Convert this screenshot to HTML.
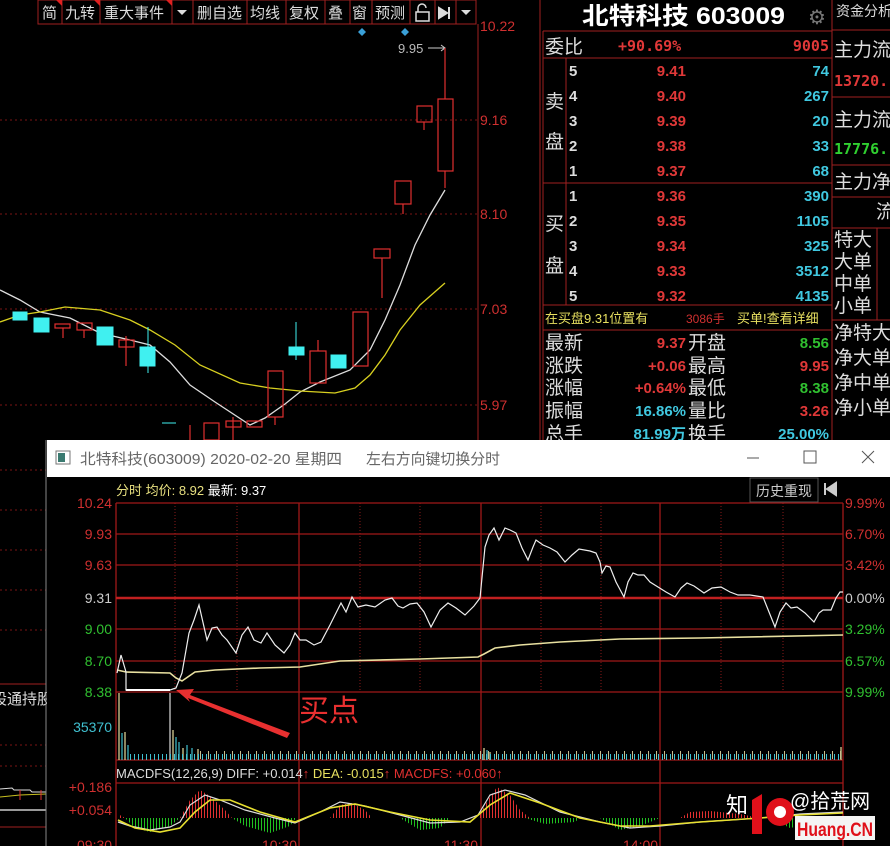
<!DOCTYPE html>
<html><head><meta charset="utf-8"><style>
html,body{margin:0;padding:0;background:#000;width:890px;height:846px;overflow:hidden}
svg{display:block}
text{font-family:"Liberation Sans","Noto Sans CJK SC",sans-serif}
.m{font-family:"DejaVu Sans Mono","Liberation Mono",monospace;font-weight:bold}
</style></head><body>
<svg width="890" height="846" viewBox="0 0 890 846" xmlns="http://www.w3.org/2000/svg">
<defs>
<pattern id="pr" width="3" height="10" patternUnits="userSpaceOnUse"><rect x="0" y="0" width="1" height="10" fill="#e03030"/></pattern>
<pattern id="pg" width="3" height="10" patternUnits="userSpaceOnUse"><rect x="0" y="0" width="1" height="10" fill="#20c020"/></pattern>
</defs>
<rect width="890" height="846" fill="#000"/>
<g stroke="#7a1515" stroke-dasharray="2 3" stroke-width="1">
<line x1="0" y1="120" x2="478" y2="120"/><line x1="0" y1="214" x2="478" y2="214"/><line x1="0" y1="309" x2="478" y2="309"/><line x1="0" y1="405" x2="478" y2="405"/>
</g>
<line x1="478" y1="24" x2="478" y2="440" stroke="#a02020"/>
<line x1="540" y1="0" x2="540" y2="440" stroke="#a02020"/>
<g font-size="14" fill="#d03030">
<text x="480" y="31">10.22</text><text x="480" y="125">9.16</text><text x="480" y="219">8.10</text><text x="480" y="314">7.03</text><text x="480" y="410">5.97</text>
</g>
<g>
<rect x="38" y="0" width="438" height="24" fill="#000" stroke="#a02020"/>
<g stroke="#a02020"><line x1="62" y1="0" x2="62" y2="24"/><line x1="100" y1="0" x2="100" y2="24"/><line x1="172" y1="0" x2="172" y2="24"/><line x1="193" y1="0" x2="193" y2="24"/><line x1="247" y1="0" x2="247" y2="24"/><line x1="286" y1="0" x2="286" y2="24"/><line x1="325" y1="0" x2="325" y2="24"/><line x1="350" y1="0" x2="350" y2="24"/><line x1="372" y1="0" x2="372" y2="24"/><line x1="410" y1="0" x2="410" y2="24"/><line x1="435" y1="0" x2="435" y2="24"/><line x1="456" y1="0" x2="456" y2="24"/></g>
<g fill="#e02020"><path d="M56 0h6v6z"/><path d="M94 0h6v6z"/><path d="M166 0h6v6z"/></g>
<g font-size="15" fill="#ddd">
<text x="42" y="18">简</text><text x="65" y="18">九转</text><text x="104" y="18">重大事件</text><text x="197" y="18">删自选</text><text x="250" y="18">均线</text><text x="289" y="18">复权</text><text x="328" y="18">叠</text><text x="352" y="18">窗</text><text x="375" y="18">预测</text>
</g>
<path d="M177 10h10l-5 5z" fill="#ddd"/><path d="M461 10h10l-5 5z" fill="#ddd"/>
<path d="M416 12h13v9h-13z M418 12v-4a4 4 0 0 1 8 0" fill="none" stroke="#ddd" stroke-width="1.5"/>
<path d="M439 8l8 5l-8 5z M449 7v12" fill="#ddd" stroke="#ddd" stroke-width="2"/>
</g>
<path d="M362 28l4 4l-4 4l-4-4z M405 28l4 4l-4 4l-4-4z" fill="#3aa0d8"/>
<text x="398" y="53" font-size="13" fill="#bbb">9.95</text>
<path d="M428 48h16" stroke="#ccc"/><path d="M441 45l4 3l-4 3" fill="none" stroke="#ccc"/>
<polyline points="0,290 20,300 40,312 70,318 100,333 130,340 150,345 170,362 190,385 215,402 250,425 265,418 285,404 300,392 320,382 350,370 370,350 385,320 400,285 415,245 430,215 445,190" fill="none" stroke="#ddd" stroke-width="1.3"/>
<polyline points="0,322 20,315 40,312 65,307 100,310 130,320 150,330 175,345 200,365 240,383 270,388 300,391 335,393 355,388 370,375 385,355 400,330 420,305 445,283" fill="none" stroke="#d8d020" stroke-width="1.3"/>
<g fill="#40f0f0" stroke="#40f0f0">
<rect x="13" y="312" width="14" height="8"/><rect x="34" y="318" width="15" height="14"/><rect x="97" y="327" width="16" height="18"/><rect x="140" y="347" width="15" height="19"/><line x1="148" y1="327" x2="148" y2="373"/><rect x="289" y="347" width="15" height="8"/><line x1="296" y1="322" x2="296" y2="360"/><rect x="331" y="355" width="15" height="13"/><line x1="162" y1="423" x2="176" y2="423"/>
</g>
<g fill="none" stroke="#e03030" stroke-width="1.2">
<rect x="55" y="324" width="15" height="4"/><line x1="63" y1="328" x2="63" y2="338"/>
<rect x="77" y="323" width="15" height="7"/><line x1="84" y1="330" x2="84" y2="338"/>
<rect x="119" y="340" width="15" height="7"/><line x1="126" y1="336" x2="126" y2="366"/>
<line x1="190" y1="425" x2="190" y2="440"/>
<rect x="204" y="423" width="15" height="17"/>
<rect x="226" y="421" width="15" height="6"/><line x1="233" y1="417" x2="233" y2="440"/>
<rect x="247" y="421" width="15" height="6"/>
<rect x="268" y="371" width="15" height="46"/><line x1="275" y1="417" x2="275" y2="425"/>
<rect x="310" y="351" width="16" height="32"/><line x1="318" y1="340" x2="318" y2="351"/>
<rect x="353" y="312" width="15" height="54"/>
<rect x="374" y="249" width="16" height="9"/><line x1="382" y1="258" x2="382" y2="298"/>
<rect x="395" y="181" width="16" height="23"/><line x1="403" y1="204" x2="403" y2="214"/>
<rect x="417" y="106" width="15" height="16"/><line x1="424" y1="122" x2="424" y2="130"/>
<rect x="438" y="99" width="15" height="72"/><line x1="445" y1="48" x2="445" y2="99"/><line x1="445" y1="171" x2="445" y2="188"/>
</g>
<text x="582" y="24" font-size="24" font-weight="bold" fill="#fff" textLength="203" lengthAdjust="spacingAndGlyphs">北特科技 603009</text>
<text x="808" y="24" font-size="20" fill="#777">⚙</text>
<g stroke="#a02020" fill="none">
<line x1="543" y1="31" x2="832" y2="31"/><line x1="543" y1="58" x2="832" y2="58"/><line x1="566" y1="58" x2="566" y2="305"/><line x1="543" y1="183" x2="832" y2="183"/><line x1="543" y1="305" x2="832" y2="305"/><line x1="543" y1="330" x2="832" y2="330"/><line x1="832" y1="0" x2="832" y2="440"/>
<line x1="543" y1="31" x2="543" y2="440"/>
</g>
<text x="545" y="53" font-size="19" fill="#ddd">委比</text>
<text x="618" y="51" class="m" font-size="15" fill="#e03838">+90.69%</text>
<text x="829" y="51" class="m" font-size="15" fill="#e03838" text-anchor="end">9005</text>
<text x="545" y="108" font-size="19" fill="#ddd">卖</text><text x="545" y="148" font-size="19" fill="#ddd">盘</text>
<text x="545" y="230" font-size="19" fill="#ddd">买</text><text x="545" y="272" font-size="19" fill="#ddd">盘</text>
<g class="m" font-size="15" fill="#ddd"><text x="569" y="76">5</text><text x="569" y="101">4</text><text x="569" y="126">3</text><text x="569" y="151">2</text><text x="569" y="176">1</text><text x="569" y="201">1</text><text x="569" y="226">2</text><text x="569" y="251">3</text><text x="569" y="276">4</text><text x="569" y="301">5</text></g>
<g class="m" font-size="15" fill="#e03838" text-anchor="end"><text x="686" y="76">9.41</text><text x="686" y="101">9.40</text><text x="686" y="126">9.39</text><text x="686" y="151">9.38</text><text x="686" y="176">9.37</text><text x="686" y="201">9.36</text><text x="686" y="226">9.35</text><text x="686" y="251">9.34</text><text x="686" y="276">9.33</text><text x="686" y="301">9.32</text></g>
<g class="m" font-size="15" fill="#40c8e0" text-anchor="end"><text x="829" y="76">74</text><text x="829" y="101">267</text><text x="829" y="126">20</text><text x="829" y="151">33</text><text x="829" y="176">68</text><text x="829" y="201">390</text><text x="829" y="226">1105</text><text x="829" y="251">325</text><text x="829" y="276">3512</text><text x="829" y="301">4135</text></g>
<text x="545" y="323" font-size="13" fill="#e8e060">在买盘9.31位置有</text>
<text x="686" y="323" font-size="12" fill="#d03030">3086手</text>
<text x="737" y="323" font-size="13" fill="#e8e060">买单!查看详细</text>
<g font-size="19" fill="#ddd"><text x="545" y="349">最新</text><text x="545" y="372">涨跌</text><text x="545" y="394">涨幅</text><text x="545" y="417">振幅</text><text x="545" y="440">总手</text>
<text x="688" y="349">开盘</text><text x="688" y="372">最高</text><text x="688" y="394">最低</text><text x="688" y="417">量比</text><text x="688" y="440">换手</text></g>
<g class="m" font-size="15" text-anchor="end">
<text x="686" y="348" fill="#e03838">9.37</text><text x="686" y="371" fill="#e03838">+0.06</text><text x="686" y="393" fill="#e03838">+0.64%</text><text x="686" y="416" fill="#40c8e0">16.86%</text><text x="686" y="439" fill="#40c8e0">81.99万</text>
<text x="829" y="348" fill="#30c030">8.56</text><text x="829" y="371" fill="#e03838">9.95</text><text x="829" y="393" fill="#30c030">8.38</text><text x="829" y="416" fill="#e03838">3.26</text><text x="829" y="439" fill="#40c8e0">25.00%</text>
</g>
<g stroke="#a02020"><line x1="832" y1="30" x2="890" y2="30"/><line x1="832" y1="97" x2="890" y2="97"/><line x1="832" y1="165" x2="890" y2="165"/><line x1="832" y1="197" x2="890" y2="197"/><line x1="832" y1="228" x2="890" y2="228"/><line x1="832" y1="320" x2="890" y2="320"/><line x1="877" y1="228" x2="877" y2="320"/></g>
<g font-size="19" fill="#ddd"><text x="834" y="56">主力流</text><text x="834" y="126">主力流</text><text x="834" y="188">主力净</text><text x="876" y="218">流</text>
<text x="834" y="246">特大</text><text x="834" y="268">大单</text><text x="834" y="290">中单</text><text x="834" y="312">小单</text>
<text x="834" y="339">净特大</text><text x="834" y="364">净大单</text><text x="834" y="389">净中单</text><text x="834" y="414">净小单</text></g>
<text x="836" y="16" font-size="14" fill="#ddd">资金分析</text>
<text x="834" y="86" class="m" font-size="15" fill="#e03838">13720.</text>
<text x="834" y="154" class="m" font-size="15" fill="#30d030">17776.</text>
<rect x="0" y="440" width="46" height="406" fill="#000"/>
<g stroke="#7a1515" stroke-dasharray="2 3"><line x1="0" y1="470" x2="46" y2="470"/><line x1="0" y1="510" x2="46" y2="510"/><line x1="0" y1="550" x2="46" y2="550"/><line x1="0" y1="590" x2="46" y2="590"/><line x1="0" y1="630" x2="46" y2="630"/><line x1="0" y1="745" x2="46" y2="745"/><line x1="0" y1="766" x2="46" y2="766"/></g>
<line x1="0" y1="684" x2="46" y2="684" stroke="#a02020"/><line x1="0" y1="827" x2="46" y2="827" stroke="#a02020"/>
<text x="-8" y="704" font-size="15" fill="#ddd">股通持股</text>
<polyline points="0,789 12,788 14,790 30,790 32,792 46,792" fill="none" stroke="#ddd"/>
<polyline points="0,797 20,795 46,794" fill="none" stroke="#c8c020"/>
<line x1="0" y1="810" x2="46" y2="810" stroke="#ccc" stroke-width="1.5"/>
<line x1="20" y1="790" x2="20" y2="800" stroke="#e03030"/><line x1="41" y1="790" x2="41" y2="800" stroke="#e03030"/>
<line x1="46" y1="440" x2="46" y2="846" stroke="#888"/>
<rect x="47" y="440" width="843" height="37" fill="#fff"/>
<rect x="56" y="451" width="14" height="13" fill="#fff" stroke="#777"/><rect x="58" y="453" width="7" height="9" fill="#3a7a70"/>
<text x="80" y="464" font-size="15" fill="#666" textLength="262" lengthAdjust="spacingAndGlyphs">北特科技(603009) 2020-02-20 星期四</text>
<text x="366" y="464" font-size="15" fill="#666" textLength="134" lengthAdjust="spacingAndGlyphs">左右方向键切换分时</text>
<line x1="747" y1="458" x2="759" y2="458" stroke="#555"/>
<rect x="804" y="451" width="12" height="12" fill="none" stroke="#555"/>
<path d="M862 451l12 12M874 451l-12 12" stroke="#555"/>
<rect x="47" y="477" width="843" height="369" fill="#000"/>
<text x="116" y="495" font-size="13" fill="#e8e080">分时 均价: 8.92 <tspan fill="#fff">最新: 9.37</tspan></text>
<rect x="750" y="478" width="68" height="24" fill="#000" stroke="#555"/>
<text x="756" y="496" font-size="14" fill="#ccc">历史重现</text>
<path d="M825 483v12 M836 483l-9 6l9 6z" stroke="#ccc" fill="#ccc" stroke-width="2"/>
<g stroke="#8a1a1a" stroke-dasharray="1 2"><line x1="175" y1="503" x2="175" y2="692"/><line x1="237" y1="503" x2="237" y2="692"/><line x1="360" y1="503" x2="360" y2="692"/><line x1="420" y1="503" x2="420" y2="692"/><line x1="541" y1="503" x2="541" y2="692"/><line x1="601" y1="503" x2="601" y2="692"/><line x1="721" y1="503" x2="721" y2="692"/><line x1="783" y1="503" x2="783" y2="692"/></g>
<g stroke="#a01818" stroke-width="1.3">
<line x1="116" y1="503" x2="843" y2="503"/><line x1="116" y1="534" x2="843" y2="534"/><line x1="116" y1="565" x2="843" y2="565"/><line x1="116" y1="629" x2="843" y2="629"/><line x1="116" y1="661" x2="843" y2="661"/><line x1="116" y1="692" x2="843" y2="692"/>
<line x1="116" y1="760" x2="843" y2="760"/><line x1="116" y1="783" x2="843" y2="783"/>
<line x1="116" y1="503" x2="116" y2="846"/><line x1="299" y1="503" x2="299" y2="846"/><line x1="481" y1="503" x2="481" y2="846"/><line x1="660" y1="503" x2="660" y2="846"/><line x1="843" y1="503" x2="843" y2="846"/>
</g>
<line x1="116" y1="598" x2="843" y2="598" stroke="#c02020" stroke-width="2.5"/>
<g font-size="14">
<text x="112" y="508" fill="#d03030" text-anchor="end">10.24</text><text x="112" y="539" fill="#d03030" text-anchor="end">9.93</text><text x="112" y="570" fill="#d03030" text-anchor="end">9.63</text><text x="112" y="603" fill="#ccc" text-anchor="end">9.31</text><text x="112" y="634" fill="#30c030" text-anchor="end">9.00</text><text x="112" y="666" fill="#30c030" text-anchor="end">8.70</text><text x="112" y="697" fill="#30c030" text-anchor="end">8.38</text>
<text x="112" y="732" fill="#40c0d0" text-anchor="end">35370</text>
<text x="845" y="508" fill="#d03030">9.99%</text><text x="845" y="539" fill="#d03030">6.70%</text><text x="845" y="570" fill="#d03030">3.42%</text><text x="845" y="603" fill="#ccc">0.00%</text><text x="845" y="634" fill="#30c030">3.29%</text><text x="845" y="666" fill="#30c030">6.57%</text><text x="845" y="697" fill="#30c030">9.99%</text>
<text x="112" y="792" fill="#d03030" text-anchor="end">+0.186</text><text x="112" y="815" fill="#d03030" text-anchor="end">+0.054</text>
</g>
<polyline points="117,670 126,672 170,673 176,678 182,681 195,672 215,670 260,668 300,667 340,661 420,659 478,657 484,654 495,648 520,645 560,642 620,639 700,638 843,635" fill="none" stroke="#e8e0a0" stroke-width="1.6"/>
<polyline points="117,673 121,655 126,672 126,690 170,690 176,688 182,673 189,633 194,620 199,605 207,640 212,628 217,627 222,635 227,640 236,653 242,635 248,627 254,640 261,643 267,633 275,645 284,653 290,645 295,633 300,640 306,640 314,645 321,642 330,625 341,603 346,612 352,597 358,607 366,605 375,607 385,600 392,598 398,606 403,608 410,604 417,603 424,612 431,627 440,610 448,603 456,608 465,615 474,606 480,598 485,547 489,535 494,528 499,540 505,528 510,530 516,533 522,548 528,560 533,547 536,540 543,545 550,548 557,552 565,562 572,555 579,549 590,551 596,553 600,562 602,573 606,566 610,567 616,582 624,597 628,582 633,573 638,575 644,575 650,582 658,587 666,592 675,597 681,588 687,583 694,586 704,593 712,588 721,587 730,592 738,595 750,595 763,597 769,612 775,627 780,612 786,603 791,608 797,607 805,613 814,622 819,613 823,610 831,610 836,598 840,592 843,592" fill="none" stroke="#eee" stroke-width="1.2"/>
<line x1="126" y1="690" x2="170" y2="690" stroke="#fff" stroke-width="2"/>
<path d="M290 733 L190 695 L194 689 L176 690 L190 702 L188 698 L287 738z" fill="#e83030"/>
<text x="299" y="721" font-size="30" fill="#e83030">买点</text>
<g stroke-width="1.2">
<line x1="119" y1="760" x2="119" y2="693" stroke="#e8e0a0"/><line x1="122" y1="760" x2="122" y2="733" stroke="#40c0d0"/><line x1="125" y1="760" x2="125" y2="732" stroke="#e8e0a0"/><line x1="128" y1="760" x2="128" y2="745" stroke="#40c0d0"/>
<line x1="170" y1="760" x2="170" y2="693" stroke="#ddd"/><line x1="173" y1="760" x2="173" y2="730" stroke="#e8e0a0"/><line x1="176" y1="760" x2="176" y2="737" stroke="#40c0d0"/><line x1="179" y1="760" x2="179" y2="742" stroke="#40c0d0"/><line x1="183" y1="760" x2="183" y2="748" stroke="#e8e0a0"/><line x1="187" y1="760" x2="187" y2="745" stroke="#40c0d0"/><line x1="192" y1="760" x2="192" y2="748" stroke="#40c0d0"/><line x1="198" y1="760" x2="198" y2="749" stroke="#e8e0a0"/>
<line x1="484" y1="760" x2="484" y2="748" stroke="#e8e0a0"/><line x1="487" y1="760" x2="487" y2="750" stroke="#40c0d0"/><line x1="490" y1="760" x2="490" y2="752" stroke="#e8e0a0"/><line x1="841" y1="760" x2="841" y2="747" stroke="#e8e0a0"/>
</g>
<line x1="130" y1="757" x2="842" y2="757" stroke="#40c0d0" stroke-width="6" stroke-dasharray="1 3"/>
<line x1="200" y1="755" x2="842" y2="755" stroke="#c8c090" stroke-width="8" stroke-dasharray="1 7"/>
<text x="116" y="778" font-size="13" fill="#ddd">MACDFS(12,26,9) DIFF: +0.014<tspan fill="#e03030">↑</tspan> <tspan fill="#e8e060">DEA: -0.015</tspan><tspan fill="#e03030">↑ MACDFS: +0.060↑</tspan></text>
<g>
<path d="M180 818 L190 800 L200 790 L210 796 L225 810 L232 818z" fill="url(#pr)"/>
<path d="M330 818 L340 805 L352 803 L365 810 L372 818z" fill="url(#pr)"/>
<path d="M478 818 L488 800 L497 787 L510 795 L520 810 L530 818z" fill="url(#pr)"/>
<path d="M680 818 L690 812 L710 811 L740 814 L760 818z" fill="url(#pr)"/>
<path d="M118 818 L118 814 L125 818z" fill="url(#pr)"/>
<path d="M125 818 L135 828 L150 832 L170 826 L180 818z" fill="url(#pg)"/>
<path d="M232 818 L245 826 L270 833 L290 826 L296 818z" fill="url(#pg)"/>
<path d="M400 818 L420 830 L440 828 L450 818z" fill="url(#pg)"/>
<path d="M525 818 L545 824 L575 822 L580 818z" fill="url(#pg)"/>
<path d="M600 818 L620 830 L640 826 L660 818z" fill="url(#pg)"/>
<path d="M770 818 L790 828 L810 824 L820 818z" fill="url(#pg)"/>
</g>
<polyline points="118,822 130,826 150,830 170,827 180,822 190,805 205,795 220,800 245,810 275,818 295,823 320,812 340,802 365,806 400,815 430,823 460,822 478,815 490,795 505,790 525,795 560,812 600,822 630,828 660,826 700,822 760,818 800,814 843,812" fill="none" stroke="#ddd" stroke-width="1.2"/>
<polyline points="118,820 135,828 160,832 180,828 195,812 210,800 230,800 260,812 295,822 330,808 355,804 390,812 430,820 470,822 490,805 510,793 540,803 580,818 620,826 650,826 700,822 760,818 800,815 843,813" fill="none" stroke="#e8e030" stroke-width="1.6"/>
<g font-size="14" fill="#d03030"><text x="77" y="850">09:30</text><text x="262" y="850">10:30</text><text x="444" y="850">11:30</text><text x="623" y="850">14:00</text></g>
<!-- watermark -->
<text x="726" y="813" font-size="22" fill="#fff">知</text>
<path d="M752 800 l10 -6 v40 h-10z" fill="#e0101a"/>
<circle cx="780" cy="812" r="14" fill="#e0101a"/><circle cx="780" cy="812" r="6" fill="#fff"/>
<text x="790" y="808" font-size="20" fill="#fff" textLength="80" lengthAdjust="spacingAndGlyphs">@拾荒网</text>
<rect x="795" y="816" width="80" height="24" fill="#f4f4f4"/>
<text x="797" y="836" font-size="19" font-weight="bold" fill="#e0101a" textLength="76" lengthAdjust="spacingAndGlyphs">Huang.CN</text>
</svg>
</body></html>
